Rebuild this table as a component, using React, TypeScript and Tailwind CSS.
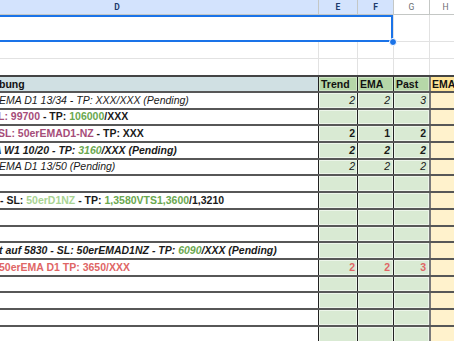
import React from 'react';

type Seg = { t: string; c?: string };
type Row = {
  h: string;
  segs?: Seg[];
  style?: string;
  ml?: string;
  vals?: string[];
  valStyle?: string;
};

const G = 'text-[#6aa84f]';
const P = 'text-[#a64d79]';
const LG = 'text-[#a9d493]';

const rows: Row[] = [
  { h: 'h-[17px]', segs: [{ t: 'EMA D1 13/34 - TP: XXX/XXX (Pending)' }], style: 'italic', ml: 'ml-[-1px]', vals: ['2', '2', '3'], valStyle: 'italic' },
  { h: 'h-[16px]', segs: [{ t: 'L: 99700', c: P }, { t: ' - TP: ' }, { t: '106000', c: G }, { t: '/XXX' }], style: 'font-bold', ml: 'ml-[-2px]' },
  { h: 'h-[17px]', segs: [{ t: 'SL: 50erEMAD1-NZ', c: P }, { t: ' - TP: XXX' }], style: 'font-bold', ml: 'ml-[-2px]', vals: ['2', '1', '2'], valStyle: 'font-bold' },
  { h: 'h-[17px]', segs: [{ t: 'A W1 10/20 - TP: ' }, { t: '3160', c: G }, { t: '/XXX (Pending)' }], style: 'font-bold italic', ml: 'ml-[-6px]', vals: ['2', '2', '2'], valStyle: 'font-bold italic' },
  { h: 'h-[16px]', segs: [{ t: 'EMA D1 13/50 (Pending)' }], style: 'italic', ml: 'ml-[-1px]', vals: ['2', '2', '2'], valStyle: 'italic' },
  { h: 'h-[17px]' },
  { h: 'h-[17px]', segs: [{ t: '- SL: ' }, { t: '50erD1NZ', c: LG }, { t: ' - TP: ' }, { t: '1,3580VTS1,3600', c: G }, { t: '/1,3210' }], style: 'font-bold', ml: 'ml-0' },
  { h: 'h-[17px]' },
  { h: 'h-[16px]' },
  { h: 'h-[17px]', segs: [{ t: 't auf 5830 - SL: 50erEMAD1NZ - TP: ' }, { t: '6090', c: G }, { t: '/XXX (Pending)' }], style: 'font-bold italic', ml: 'ml-[-1px]' },
  { h: 'h-[17px]', segs: [{ t: '50erEMA D1 TP: 3650/XXX' }], style: 'font-bold text-[#e06666]', ml: 'ml-[-1px]', vals: ['2', '2', '3'], valStyle: 'font-bold text-[#e06666]' },
  { h: 'h-[16px]' },
  { h: 'h-[17px]' },
  { h: 'h-[17px]' },
  { h: 'h-[20px]' },
];

const greenCell = 'bg-[#d9ead3] shadow-[inset_0_0_0_1px_#edf5ea]';

function DataRow({ r }: { r: Row }) {
  const v = r.vals ?? ['', '', ''];
  return (
    <div className={`flex ${r.h} border-t-2 border-[#575757] text-[10.5px] leading-[12px] text-[#1a1a1a]`}>
      <div className={`w-[318px] shrink-0 overflow-hidden whitespace-nowrap flex items-end pb-[2px] bg-white ${r.style ?? ''}`}>
        <span className={r.ml ?? ''}>
          {r.segs?.map((s, i) => (
            <span key={i} className={s.c ?? ''}>
              {s.t}
            </span>
          ))}
        </span>
      </div>
      <div className={`w-[39px] shrink-0 border-l border-[#222] flex items-end justify-end pr-[2px] pb-[2px] ${greenCell} ${r.valStyle ?? ''}`}>{v[0]}</div>
      <div className={`w-[36px] shrink-0 border-l border-[#222] flex items-end justify-end pr-[3px] pb-[2px] ${greenCell} ${r.valStyle ?? ''}`}>{v[1]}</div>
      <div className={`w-[36px] shrink-0 border-l border-[#222] flex items-end justify-end pr-[3px] pb-[2px] ${greenCell} ${r.valStyle ?? ''}`}>{v[2]}</div>
      <div className="flex-1 border-l-2 border-[#7a7a7a] bg-[#fff2cc]"></div>
    </div>
  );
}

export default function App() {
  return (
    <div className="relative w-[454px] h-[341px] overflow-hidden bg-white font-['Liberation_Sans',Arial,sans-serif]">
      {/* column letters */}
      <div className="flex h-[15px] border-b border-[#c4c7c5] text-[8.5px] leading-[14px] font-['Roboto',Arial,sans-serif]">
        <div className="w-[318px] shrink-0 overflow-hidden bg-[#d3e3fd]">
          <div className="w-[402px] ml-[-84px] text-center font-bold text-[#1c3a6b]">D</div>
        </div>
        <div className="w-[39px] shrink-0 border-l border-[#c4c7c5] bg-[#d3e3fd] text-center font-bold text-[#1c3a6b]">E</div>
        <div className="w-[36px] shrink-0 border-l border-[#c4c7c5] bg-[#d3e3fd] text-center font-bold text-[#1c3a6b]">F</div>
        <div className="w-[36px] shrink-0 border-l border-[#c4c7c5] bg-white text-center text-[#6b6e72]">G</div>
        <div className="w-[32px] shrink-0 border-l border-[#c4c7c5] bg-white text-center text-[#6b6e72]">H</div>
      </div>

      {/* row 1 (merged, selected) */}
      <div className="flex h-[27px] border-b border-[#e2e2e2]">
        <div className="w-[393px] shrink-0 bg-white"></div>
        <div className="w-[36px] shrink-0 border-l border-[#e2e2e2]"></div>
        <div className="flex-1 border-l border-[#e2e2e2]"></div>
      </div>
      {/* row 2 */}
      <div className="flex h-[17px] border-b border-[#e2e2e2]">
        <div className="w-[318px] shrink-0"></div>
        <div className="w-[39px] shrink-0 border-l border-[#e2e2e2]"></div>
        <div className="w-[36px] shrink-0 border-l border-[#e2e2e2]"></div>
        <div className="w-[36px] shrink-0 border-l border-[#e2e2e2]"></div>
        <div className="flex-1 border-l border-[#e2e2e2]"></div>
      </div>
      {/* row 3 */}
      <div className="flex h-[16px]">
        <div className="w-[318px] shrink-0"></div>
        <div className="w-[39px] shrink-0 border-l border-[#e2e2e2]"></div>
        <div className="w-[36px] shrink-0 border-l border-[#e2e2e2]"></div>
        <div className="w-[36px] shrink-0 border-l border-[#e2e2e2]"></div>
        <div className="flex-1 border-l border-[#e2e2e2]"></div>
      </div>

      {/* header row */}
      <div className="flex h-[16px] border-t-2 border-[#444] text-[10.5px] leading-[12px] font-bold text-[#111]">
        <div className="w-[318px] shrink-0 overflow-hidden whitespace-nowrap flex items-end pb-[1px] bg-[#d0e0e3]">
          <span className="ml-[-1px]">bung</span>
        </div>
        <div className="w-[39px] shrink-0 border-l border-[#222] flex items-end pl-[2px] pb-[1px] bg-[#b6d7a8] shadow-[inset_0_0_0_1px_#cfe5c5]">Trend</div>
        <div className="w-[36px] shrink-0 border-l border-[#222] flex items-end pl-[2px] pb-[1px] bg-[#b6d7a8] shadow-[inset_0_0_0_1px_#cfe5c5]">EMA</div>
        <div className="w-[36px] shrink-0 border-l border-[#222] flex items-end pl-[2px] pb-[1px] bg-[#b6d7a8] shadow-[inset_0_0_0_1px_#cfe5c5]">Past</div>
        <div className="flex-1 border-l-2 border-[#7a7a7a] flex items-end pl-[1px] pb-[1px] bg-[#ffe599] overflow-hidden whitespace-nowrap">EMA</div>
      </div>

      {rows.map((r, i) => (
        <DataRow key={i} r={r} />
      ))}

      {/* selection overlay */}
      <div className="absolute left-[-4px] top-[15px] w-[397px] h-[27px] border-2 border-[#1a73e8] pointer-events-none"></div>
      <div className="absolute left-[389px] top-[38px] w-[8px] h-[8px] rounded-full bg-[#1a73e8] border border-white"></div>
    </div>
  );
}
